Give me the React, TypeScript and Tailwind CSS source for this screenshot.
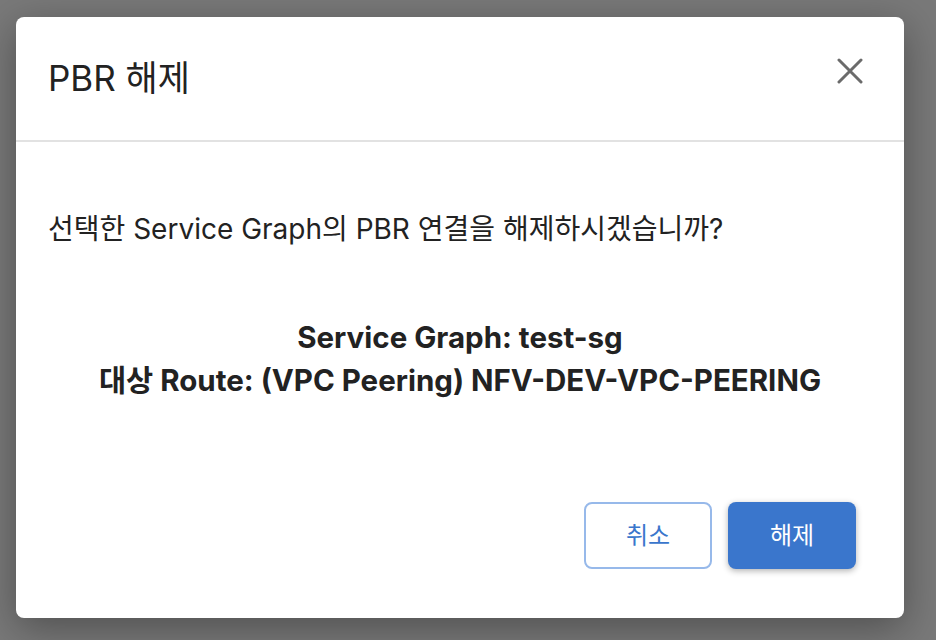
import React from 'react';

const font = { fontFamily: '"Inter", "Noto Sans CJK KR", sans-serif' };

export default function App() {
  return (
    <div className="flex h-[640px] w-full justify-start bg-[#797979] pl-[16px] pt-[17px]" style={font}>
      <div className="flex h-[601px] w-[888px] flex-col rounded-[8px] bg-white shadow-[0_10px_40px_rgba(0,0,0,0.35)]">
        {/* 헤더 */}
        <div className="flex h-[125px] items-center justify-between border-b-2 border-[#e2e2e2] pl-[32px] pr-[41px]">
          <h2 className="text-[35px] font-normal text-[#222]">PBR 해제</h2>
          <button className="mt-[41px] flex h-[26px] w-[26px] items-center justify-center self-start">
            <svg width="26" height="26" viewBox="0 0 26 26" fill="none" stroke="#6b6b6b" strokeWidth="3" strokeLinecap="round">
              <path d="M2 2 L24 24 M24 2 L2 24" />
            </svg>
          </button>
        </div>

        {/* 본문 */}
        <div className="flex flex-1 flex-col px-[32px] pt-[69px]">
          <p className="text-[28px] leading-[36px] text-[#222]">
            선택한 Service Graph의 PBR 연결을 해제하시겠습니까?
          </p>
          <div className="mt-[69px] text-center text-[29.5px] font-bold leading-[43px] text-[#222]">
            <div>Service Graph: test-sg</div>
            <div>대상 Route: (VPC Peering) NFV-DEV-VPC-PEERING</div>
          </div>
        </div>

        {/* 하단 버튼 */}
        <div className="flex justify-end gap-[16px] pb-[49px] pr-[48px]">
          <button className="h-[67px] w-[128px] rounded-[8px] border-2 border-[#97b9ea] bg-white text-[24px] text-[#3a76cc]">
            취소
          </button>
          <button className="h-[67px] w-[128px] rounded-[8px] bg-[#3a76cc] text-[24px] text-white shadow-[0_2px_6px_rgba(0,0,0,0.3)]">
            해제
          </button>
        </div>
      </div>
    </div>
  );
}
